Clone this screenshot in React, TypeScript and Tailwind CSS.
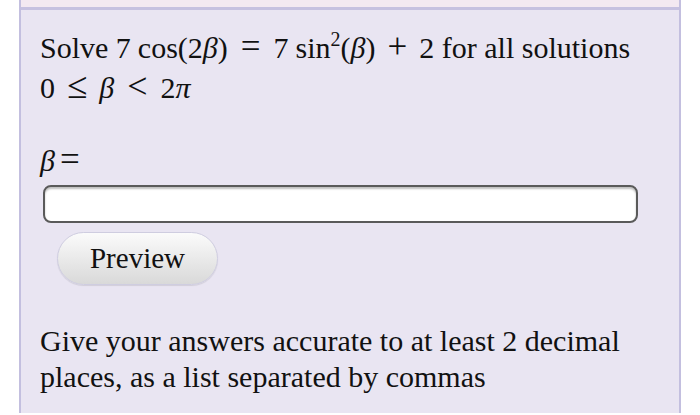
import React from "react";

export default function App() {
  return (
    <div className="w-[700px] h-[415px] bg-white overflow-hidden" style={{ fontFamily: '"Liberation Serif", "Times New Roman", serif' }}>
      <div className="ml-[19px] w-[662px] h-[413px] flex flex-col border-x-2 border-[#c3bfdf] bg-[#e9e5f2]">
        <div className="h-[7px] bg-[#f3e9f1] border-b-[3px] border-[#c6c1e0] box-content"></div>
        <div className="pl-[19px] pt-[18px] text-[30px] leading-[39px] text-[#111] whitespace-nowrap">
          <div className="h-[39px]">
            Solve 7<span className="ml-[7px]">cos(2<i>β</i>)</span>
            <span className="mx-[13px] text-[35px] leading-none">=</span>7<span className="ml-[7px]">sin</span>
            <span className="text-[20px] relative -top-[12px]">2</span>(<i>β</i>)
            <span className="mx-[12px] text-[35px] leading-none">+</span>2 for all solutions
          </div>
          <div className="h-[39px]">
            0<span className="mx-[12px] text-[37px] leading-none">≤</span><i>β</i><span className="mx-[13px] text-[36px] leading-none">&lt;</span>2<i>π</i>
          </div>
        </div>
        <div className="pl-[19px] mt-[36px] h-[36px] text-[30px] leading-[36px] text-[#111]">
          <i>β</i><span className="ml-[5px] text-[35px] leading-none">=</span>
        </div>
        <div className="pl-[22px] mt-[7px]">
          <div className="w-[595px] h-[38px] bg-white border-2 border-[#5a5a5a] rounded-[8px] shadow-[inset_0_2px_2px_rgba(0,0,0,0.25)]"></div>
        </div>
        <div className="pl-[36px] mt-[9px]">
          <button className="w-[161px] h-[53px] rounded-full border border-[#cfcde0] bg-gradient-to-b from-[#fbfbfb] to-[#d9d9d9] text-[29px] text-[#111] shadow-[0_1px_1px_rgba(0,0,0,0.1)]" style={{ fontFamily: '"Liberation Serif", serif' }}>
            Preview
          </button>
        </div>
        <div className="pl-[19px] mt-[38px] text-[30px] leading-[36px] text-[#111] whitespace-nowrap">
          Give your answers accurate to at least 2 decimal<br />places, as a list separated by commas
        </div>
      </div>
    </div>
  );
}
